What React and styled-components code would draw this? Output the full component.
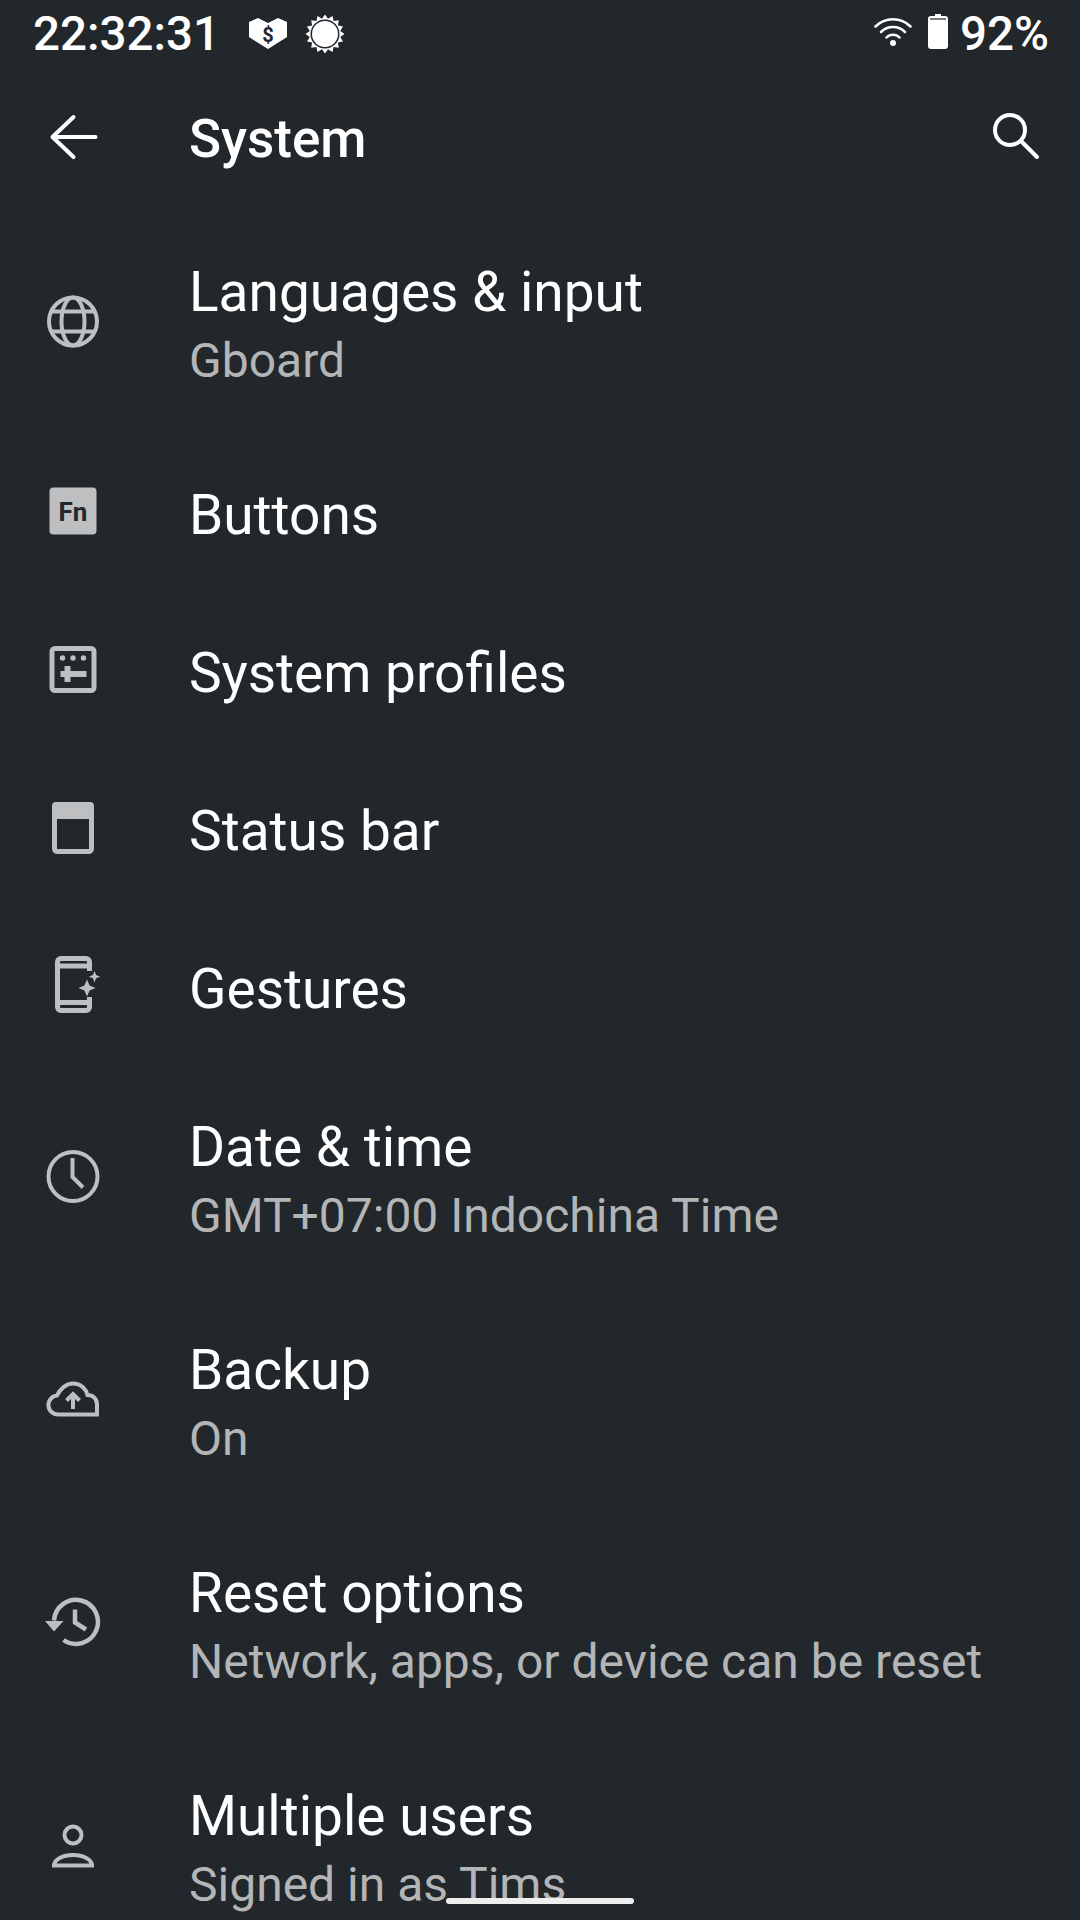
import styled, { createGlobalStyle } from "styled-components";

const GlobalStyle = createGlobalStyle`
  * {
    box-sizing: border-box;
  }
  html, body {
    margin: 0;
    padding: 0;
    background: #22272b;
  }
`;

const ICON = "#bdbfc1";

// sawtooth outline of the brightness icon in the status bar
const sunPoints = Array.from({ length: 32 }, (_, i) => {
  const r = i % 2 === 0 ? 19.5 : 15.5;
  const a = (i * Math.PI) / 16 - Math.PI / 2;
  return `${(20 + r * Math.cos(a)).toFixed(1)},${(20 + r * Math.sin(a)).toFixed(1)}`;
}).join(" ");

const Globe = () => (
  <RowIcon viewBox="0 0 72 72">
    <g fill="none" stroke={ICON} strokeWidth="4">
      <circle cx="36" cy="35.5" r="24" />
      <ellipse cx="36" cy="35.5" rx="11.5" ry="24" />
      <path d="M15 25.5h42M15 45.5h42" />
    </g>
  </RowIcon>
);

const FnKey = () => (
  <RowIcon viewBox="0 0 72 72">
    <rect x="12.5" y="11.5" width="47" height="47" rx="4" fill={ICON} />
    <text x="36" y="45" textAnchor="middle" fontFamily="Roboto, sans-serif" fontWeight="700" fontSize="26" fill="#22272b">Fn</text>
  </RowIcon>
);

const Profiles = () => (
  <RowIcon viewBox="0 0 72 72">
    <rect x="15" y="14.5" width="42" height="42" rx="3" fill="none" stroke={ICON} strokeWidth="5" />
    <g fill={ICON}>
      <circle cx="25.5" cy="24" r="2.7" />
      <circle cx="36" cy="24" r="2.7" />
      <circle cx="46.5" cy="24" r="2.7" />
      <path d="M23.5 37h26v6h-26zM27.5 32h6v16h-6z" />
    </g>
  </RowIcon>
);

const StatusBarIcon = () => (
  <RowIcon viewBox="0 0 72 72">
    <rect x="17.5" y="12.5" width="37" height="47" rx="3" fill="none" stroke={ICON} strokeWidth="5" />
    <rect x="15" y="10" width="42" height="17" rx="4" fill={ICON} />
  </RowIcon>
);

const Gestures = () => (
  <RowIcon viewBox="0 0 72 72">
    <path
      d="M52.5 21v-9a3.500 3.500 0 0 0-3.500-3.500H24a3.500 3.500 0 0 0-3.500 3.500v45a3.500 3.500 0 0 0 3.500 3.500h25a3.500 3.500 0 0 0 3.500-3.500v-10"
      fill="none"
      stroke={ICON}
      strokeWidth="5"
    />
    <path d="M20 16h33M20 52.500h33" stroke={ICON} strokeWidth="5" />
    <path d="M50 29.500l2.600 5.900 5.900 2.600-5.900 2.600L50 46.500l-2.600-5.900-5.900-2.600 5.900-2.600zM57.500 21l1.600 4.100 4.100 1.600-4.100 1.600-1.600 4.100-1.600-4.100-4.100-1.600 4.100-1.600z" fill={ICON} />
  </RowIcon>
);

const Clock = () => (
  <RowIcon viewBox="0 0 72 72">
    <g fill="none" stroke={ICON} strokeWidth="4">
      <circle cx="36" cy="35.5" r="24.5" />
      <path d="M35.5 17v19l10.5 10.5" />
    </g>
  </RowIcon>
);

const Cloud = () => (
  <RowIcon viewBox="0 0 72 72">
    <path
      d="M60 50.500H22a9.500 9.500 0 0 1-2-19C23 25 29 19.500 36 19.500c8 0 13 5.500 14.500 11.500 5.500 0 9.500 4 9.500 9.500z"
      fill="none"
      stroke={ICON}
      strokeWidth="4"
    />
    <path d="M36 45V31M29.500 36.500l6.500-6.500 6.500 6.500" fill="none" stroke={ICON} strokeWidth="4" />
  </RowIcon>
);

const History = () => (
  <RowIcon viewBox="0 0 72 72">
    <g fill="none" stroke={ICON} strokeWidth="4.5">
      <path d="M17 33.500A22 22 0 1 1 26.500 53" />
      <path d="M38 22.500v13l11 7" />
    </g>
    <path d="M8 34h18.500l-9.500 10.500z" fill={ICON} />
  </RowIcon>
);

const Person = () => (
  <RowIcon viewBox="0 0 72 72">
    <g fill="none" stroke={ICON} strokeWidth="4">
      <circle cx="36" cy="25" r="8.500" />
      <path d="M17 55.500c0-6 9-10.500 19-10.500s19 4.500 19 10.500z" />
    </g>
  </RowIcon>
);

const rows = [
  { title: "Languages & input", sub: "Gboard", Icon: Globe },
  { title: "Buttons", Icon: FnKey },
  { title: "System profiles", Icon: Profiles },
  { title: "Status bar", Icon: StatusBarIcon },
  { title: "Gestures", Icon: Gestures },
  { title: "Date & time", sub: "GMT+07:00 Indochina Time", Icon: Clock },
  { title: "Backup", sub: "On", Icon: Cloud },
  { title: "Reset options", sub: "Network, apps, or device can be reset", Icon: History },
  { title: "Multiple users", sub: "Signed in as Tims", Icon: Person },
];

const App = () => {
  return (
    <>
      <GlobalStyle />
      <Screen>
        <StatusBar>
          <Clocktext>22:32:31</Clocktext>
          <StatusLeftIcons>
            <svg width="38" height="32" viewBox="0 0 38 32">
              <path d="M0 4l9-4 10 5 10-5 9 4v15L19 31 0 19z" fill="#fff" />
              <text x="19" y="24" textAnchor="middle" fontFamily="Roboto, sans-serif" fontWeight="700" fontSize="20" fill="#22272b">$</text>
            </svg>
            <svg width="40" height="40" viewBox="0 0 40 40">
              <polygon points={sunPoints} fill="#fff" />
              <circle cx="20" cy="20" r="14.500" fill="#22272b" />
              <circle cx="20" cy="20" r="13" fill="#fff" />
            </svg>
          </StatusLeftIcons>
          <StatusRight>
            <svg width="38" height="30" viewBox="0 0 38 30">
              <g fill="none" stroke="#fff" strokeWidth="2.500" strokeLinecap="round">
                <path d="M1.500 10.500a25 25 0 0 1 35 0" />
                <path d="M7 16a17 17 0 0 1 24 0" />
                <path d="M12.500 21.500a9 9 0 0 1 13 0" />
              </g>
              <circle cx="19" cy="27" r="3" fill="#fff" />
            </svg>
            <svg width="20" height="35" viewBox="0 0 20 35">
              <path d="M7 0h6v2h4a3 3 0 0 1 3 3v27a3 3 0 0 1-3 3H3a3 3 0 0 1-3-3V5a3 3 0 0 1 3-3h4z" fill="#fff" />
              <path d="M2 5h16" stroke="#22272b" strokeWidth="1.200" />
            </svg>
            <Percent>92%</Percent>
          </StatusRight>
        </StatusBar>

        <Toolbar>
          <svg width="72" height="72" viewBox="0 0 72 72">
            <path d="M59.500 36H16.500M37.500 16L16.500 36 37.500 56" fill="none" stroke="#fff" strokeWidth="4" strokeLinecap="round" strokeLinejoin="round" />
          </svg>
          <ToolbarTitle>System</ToolbarTitle>
          <svg width="72" height="72" viewBox="0 0 72 72">
            <circle cx="30" cy="29" r="15" fill="none" stroke="#fff" strokeWidth="4" />
            <path d="M41 40l16 16" stroke="#fff" strokeWidth="4" strokeLinecap="round" />
          </svg>
        </Toolbar>

        <List>
          {rows.map(({ title, sub, Icon }) => (
            <Row key={title} $double={!!sub}>
              <IconCell>
                <Icon />
              </IconCell>
              <RowText>
                <RowTitle>{title}</RowTitle>
                {sub && <RowSub>{sub}</RowSub>}
              </RowText>
            </Row>
          ))}
        </List>

        <GestureBar />
      </Screen>
    </>
  );
};

const Screen = styled.div`
  position: relative;
  width: 1080px;
  height: 1920px;
  overflow: hidden;
  background: #22272b;
  color: #fff;
  font-family: Roboto, "Noto Sans", sans-serif;
`;

const StatusBar = styled.div`
  display: flex;
  align-items: center;
  height: 68px;
  padding: 0 31px 0 33px;
`;

const Clocktext = styled.div`
  font-size: 47.5px;
  line-height: 68px;
  font-weight: 500;
`;

const StatusLeftIcons = styled.div`
  display: flex;
  align-items: center;
  gap: 18px;
  margin-left: 29px;
`;

const StatusRight = styled.div`
  display: flex;
  align-items: center;
  margin-left: auto;
  gap: 16px;

  svg {
    margin-bottom: 6px;
  }
`;

const Percent = styled.div`
  font-size: 47.5px;
  font-weight: 500;
  line-height: 68px;
  margin-left: -4px;
`;

const Toolbar = styled.div`
  display: flex;
  align-items: center;
  height: 142px;
  padding: 0 28px 4px 35.5px;

  svg:last-child {
    margin-left: auto;
  }
`;

const ToolbarTitle = styled.div`
  font-size: 53px;
  font-weight: 500;
  margin-left: 81.5px;
  padding-top: 4px;
`;

const List = styled.div`
  display: flex;
  flex-direction: column;
`;

const Row = styled.div`
  display: flex;
  align-items: center;
  flex-shrink: 0;
  height: ${(p) => (p.$double ? "223px" : "158px")};
`;

const IconCell = styled.div`
  display: flex;
  justify-content: center;
  width: 72px;
  margin: 0 80px 0 37px;
`;

const RowIcon = styled.svg`
  display: block;
  width: 72px;
  height: 72px;
`;

const RowText = styled.div`
  display: flex;
  flex-direction: column;
  padding-top: 5px;
`;

const RowTitle = styled.div`
  font-size: 55px;
  line-height: 66px;
`;

const RowSub = styled.div`
  font-size: 48px;
  line-height: 56.5px;
  margin-top: 8px;
  color: #b3b5b7;
`;

const GestureBar = styled.div`
  position: absolute;
  left: 446px;
  top: 1898px;
  width: 188px;
  height: 6px;
  border-radius: 3px;
  background: #eeeeee;
`;

export default App;
